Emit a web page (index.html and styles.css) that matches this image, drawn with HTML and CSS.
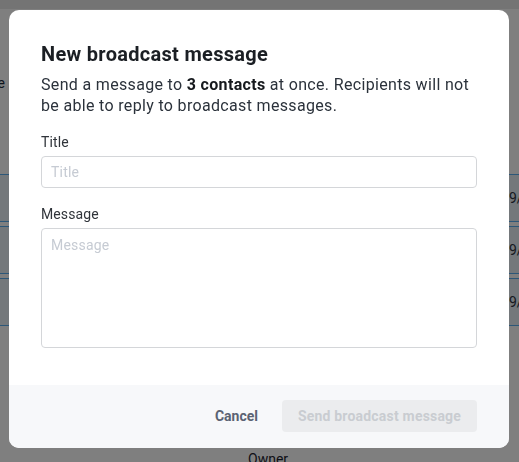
FILE: index.html
```html
<!DOCTYPE html>
<html lang="en">
<head>
<meta charset="utf-8">
<title>New broadcast message</title>
<link rel="stylesheet" href="styles.css">
</head>
<body>
<div class="page">
  <div class="topbar"></div>
  <div class="section-head"><div class="clip"><span>Name</span></div></div>
  <div class="rows">
    <div class="row"><span class="date">9/12/2023</span></div>
    <div class="row"><span class="date">9/12/2023</span></div>
    <div class="row"><span class="date">9/12/2023</span></div>
  </div>
  <div class="owner">Owner</div>
</div>

<div class="overlay">
  <div class="modal" role="dialog" aria-labelledby="dlg-title">
    <div class="modal-body">
      <h2 id="dlg-title" class="modal-title">New broadcast message</h2>
      <p class="modal-desc">Send a message to <strong>3 contacts</strong> at once. Recipients will not be able to reply to broadcast messages.</p>
      <label class="field">
        <span class="field-label">Title</span>
        <input class="input" type="text" placeholder="Title">
      </label>
      <label class="field">
        <span class="field-label">Message</span>
        <textarea class="input textarea" placeholder="Message"></textarea>
      </label>
    </div>
    <div class="modal-footer">
      <button class="btn-cancel" type="button">Cancel</button>
      <button class="btn-send" type="button" disabled>Send broadcast message</button>
    </div>
  </div>
</div>
</body>
</html>
```

FILE: styles.css
```css
* { box-sizing: border-box; }

html, body {
  margin: 0;
  height: 100%;
}

body {
  font-family: Roboto, "Liberation Sans", Arial, sans-serif;
  background: #ffffff;
  overflow: hidden;
}

/* ---------- page behind the dialog ---------- */
.page {
  height: 462px;
  display: flex;
  flex-direction: column;
}

.topbar {
  height: 9px;
  background: #e8e8e8;
}

.section-head {
  margin-top: 51px;
  height: 45px;
  background: #ffffff;
  display: flex;
  align-items: center;
}

.clip {
  width: 5px;
  overflow: hidden;
  display: flex;
  justify-content: flex-end;
  font-size: 14px;
  color: #1c2a3a;
}

.clip span { white-space: nowrap; }

.rows {
  margin-top: 69px;
  display: flex;
  flex-direction: column;
  gap: 4px;
}

.row {
  height: 48px;
  border-top: 1px solid #5aaef0;
  border-bottom: 1px solid #5aaef0;
  background: #e8f0f6;
  display: flex;
  align-items: center;
  padding-left: 509px;
  font-size: 14px;
  color: #2c3440;
  overflow: hidden;
}

.date { white-space: nowrap; }

.owner {
  margin-top: auto;
  padding-left: 248px;
  font-size: 14px;
  line-height: 14px;
  color: #1d2330;
  margin-bottom: -4px;
}

/* ---------- overlay + dialog ---------- */
.overlay {
  position: fixed;
  inset: 0;
  background: rgba(0, 0, 0, 0.5);
}

.modal {
  position: absolute;
  left: 9px;
  top: 10px;
  width: 500px;
  height: 438px;
  background: #ffffff;
  border-radius: 10px;
  display: flex;
  flex-direction: column;
  overflow: hidden;
}

.modal-body {
  flex: 1;
  padding: 32px 32px 0;
}

.modal-title {
  margin: 0;
  font-size: 20px;
  line-height: 24px;
  font-weight: 700;
  letter-spacing: 0.3px;
  color: #1b1f24;
}

.modal-desc {
  margin: 8px 0 0;
  font-size: 16px;
  line-height: 21px;
  letter-spacing: 0.33px;
  color: #2b323b;
}

.modal-desc strong {
  font-weight: 700;
  color: #16191d;
}

.field {
  display: flex;
  flex-direction: column;
  gap: 4px;
  margin-top: 16px;
}

.field-label {
  font-size: 14px;
  line-height: 20px;
  letter-spacing: 0.1px;
  color: #30343a;
}

.input {
  display: block;
  width: 436px;
  height: 32px;
  padding: 0 9px;
  border: 1px solid #d4d6d9;
  border-radius: 4px;
  font-family: inherit;
  font-size: 14px;
  letter-spacing: 0.2px;
  color: #2b323b;
  background: #ffffff;
  outline: none;
}

.input::placeholder { color: #c6cbd3; }

.textarea {
  height: 120px;
  padding: 7px 9px;
  resize: none;
  line-height: 18px;
}

.modal-footer {
  height: 63px;
  background: #f7f8fa;
  display: flex;
  align-items: center;
  justify-content: flex-end;
  padding: 0 32px 1px;
  gap: 12px;
}

.btn-cancel {
  border: 0;
  background: transparent;
  font-family: inherit;
  font-size: 14px;
  font-weight: 700;
  color: #5b6373;
  padding: 0 12px;
  height: 32px;
  cursor: pointer;
}

.btn-send {
  height: 32px;
  width: 195px;
  border: 0;
  border-radius: 4px;
  background: #ebecee;
  font-family: inherit;
  font-size: 14px;
  font-weight: 700;
  letter-spacing: 0.2px;
  color: #c9ccd1;
  padding: 0;
}
```
